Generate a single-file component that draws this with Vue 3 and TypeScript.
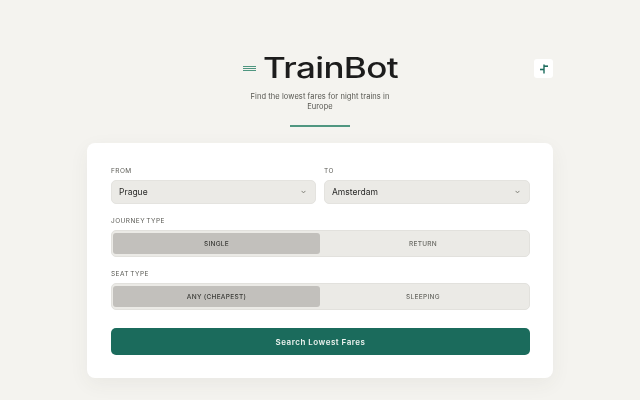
<template>
  <div class="page">
    <button class="theme" aria-label="theme">
      <svg width="12" height="12" viewBox="0 0 12 12">
        <path d="M6 1.5 V10.5" stroke="#1b6b5c" stroke-width="1.4" fill="none" />
        <path d="M2 6.5 H6" stroke="#1b6b5c" stroke-width="1.6" fill="none" />
        <path d="M6 3.2 H10" stroke="#1b6b5c" stroke-width="1.6" fill="none" />
      </svg>
    </button>
    <header class="head">
      <div class="brand">
        <span class="lines"><i></i><i></i><i></i></span>
        <h1>TrainBot</h1>
      </div>
      <p class="sub">Find the lowest fares for night trains in Europe</p>
      <div class="rule"></div>
    </header>
    <main class="card">
      <div class="cols">
        <div class="field">
          <label>FROM</label>
          <div class="select">
            <span>{{ from }}</span>
            <svg width="5" height="4" viewBox="0 0 5 4"><path d="M.6.9 2.5 2.9 4.4.9" stroke="#77776f" stroke-width=".9" fill="none" /></svg>
          </div>
        </div>
        <div class="field">
          <label>TO</label>
          <div class="select">
            <span>{{ to }}</span>
            <svg width="5" height="4" viewBox="0 0 5 4"><path d="M.6.9 2.5 2.9 4.4.9" stroke="#77776f" stroke-width=".9" fill="none" /></svg>
          </div>
        </div>
      </div>
      <div v-for="g in groups" :key="g.label" class="field group">
        <label>{{ g.label }}</label>
        <div class="toggle">
          <button
            v-for="(o, i) in g.options"
            :key="o"
            :class="{ on: g.selected === i }"
            @click="g.selected = i"
          >{{ o }}</button>
        </div>
      </div>
      <button class="search">Search Lowest Fares</button>
    </main>
  </div>
</template>

<script setup lang="ts">
import { reactive, ref } from 'vue'

const from = ref('Prague')
const to = ref('Amsterdam')
const groups = reactive([
  { label: 'JOURNEY TYPE', options: ['SINGLE', 'RETURN'], selected: 0 },
  { label: 'SEAT TYPE', options: ['ANY (CHEAPEST)', 'SLEEPING'], selected: 0 },
])
</script>

<style>
html, body { margin: 0; background: #f4f3ef; }
</style>

<style scoped>
.page {
  position: relative;
  width: 640px;
  height: 400px;
  overflow: hidden;
  box-sizing: border-box;
  padding-top: 50px;
  background: #f4f3ef;
  font-family: Inter, "Liberation Sans", sans-serif;
  will-change: transform;
}
.theme {
  position: absolute;
  left: 534px;
  top: 59px;
  width: 19px;
  height: 19px;
  padding: 0;
  border: 0;
  border-radius: 3px;
  background: #fff;
  display: flex;
  align-items: center;
  justify-content: center;
}
.head {
  display: flex;
  flex-direction: column;
  align-items: center;
}
.brand {
  display: flex;
  align-items: center;
  height: 36px;
  gap: 7px;
}
.lines {
  display: flex;
  flex-direction: column;
  gap: 1px;
  width: 13px;
}
.lines i {
  display: block;
  height: 1px;
  background: #4f9680;
}
h1 {
  margin: 0;
  font-size: 28px;
  font-weight: 500;
  line-height: 36px;
  color: #1c1c1c;
  letter-spacing: -0.5px;
  transform: scaleX(1.25);
  transform-origin: left center;
  width: 134px;
  white-space: nowrap;
}
.sub {
  margin: 6px 0 0;
  width: 150px;
  font-size: 7.5px;
  line-height: 10px;
  letter-spacing: 0.08px;
  text-align: center;
  color: #55554f;
}
.rule {
  width: 60px;
  height: 2px;
  margin-top: 13px;
  background: #4f9680;
}
.card {
  box-sizing: border-box;
  width: 466px;
  height: 235px;
  margin: 16px 0 0 87px;
  padding: 24px 23px 24px 24px;
  background: #fff;
  border-radius: 8px;
  box-shadow: 0 6px 20px rgba(60, 60, 50, 0.06);
}
.cols {
  display: grid;
  grid-template-columns: 205px 206px;
  gap: 8px;
}
.field label {
  display: block;
  height: 9px;
  margin-bottom: 4px;
  font-size: 6.5px;
  line-height: 9px;
  letter-spacing: 0.45px;
  word-spacing: -1px;
  color: #5a5a54;
}
.select {
  box-sizing: border-box;
  height: 24px;
  padding: 0 9px 0 7px;
  display: flex;
  align-items: center;
  justify-content: space-between;
  background: #ebeae6;
  border: 1px solid #e4e3df;
  border-radius: 5px;
  font-size: 8.5px;
  color: #2a2a28;
}
.group { margin-top: 13px; }
.toggle {
  box-sizing: border-box;
  height: 27px;
  padding: 2px 3px 2px 1px;
  display: grid;
  grid-template-columns: 207px 1fr;
  background: #ebeae6;
  border: 1px solid #e2e1dd;
  border-radius: 5px;
}
.toggle button {
  border: 0;
  padding: 0;
  background: transparent;
  border-radius: 3px;
  font-family: inherit;
  font-size: 6.5px;
  font-weight: 500;
  letter-spacing: 0.3px;
  color: #6a6a64;
}
.toggle button.on {
  background: #c2c0bc;
  color: #3a3a36;
}
.search {
  display: block;
  width: 100%;
  height: 27px;
  margin-top: 18px;
  border: 0;
  border-radius: 5px;
  background: #1b6b5c;
  color: #eef4f0;
  font-family: inherit;
  font-size: 8px;
  font-weight: 600;
  letter-spacing: 0.5px;
}
</style>
